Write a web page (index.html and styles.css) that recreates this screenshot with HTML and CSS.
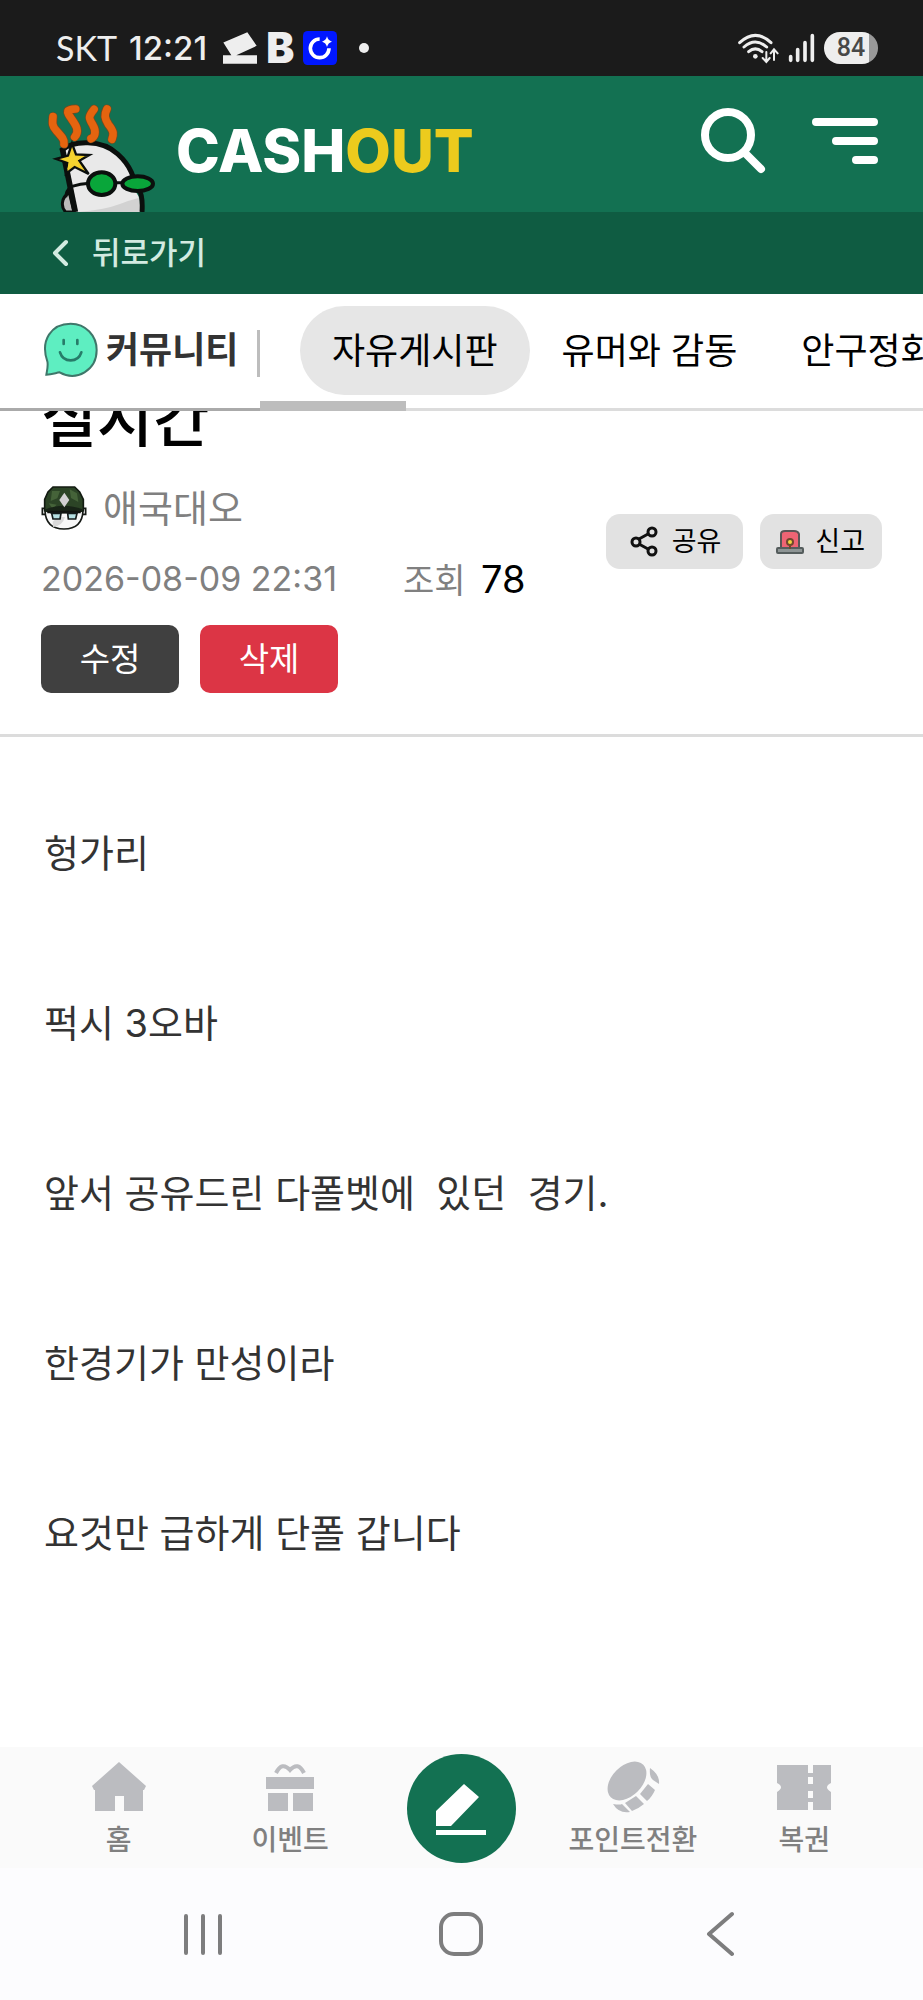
FILE: index.html
```html
<!DOCTYPE html>
<html lang="ko">
<head>
<meta charset="utf-8">
<meta name="viewport" content="width=device-width, initial-scale=1">
<title>CASHOUT - 자유게시판</title>
<link rel="stylesheet" href="styles.css">
</head>
<body>
<div class="status-bar">
  <span class="carrier">SKT</span>
  <span class="clock">12:21</span>
  <svg class="status-ticket" width="34" height="32" viewBox="668 97 102 95" aria-hidden="true"><path fill="#eee" d="M669 128 741 97l28 41-61 28h62v26H668v-26h25z"/></svg>
  <span class="status-b">B</span>
  <svg width="34" height="34" viewBox="909 94 102 102" aria-hidden="true"><rect x="909" y="94" width="102" height="102" rx="14" fill="#0017ff"/><path d="M959 118a28 28 0 1 0 28 28" fill="none" stroke="#fff" stroke-width="11"/><path fill="#fff" d="M981 110q3 13 15 16-12 3-15 16-3-13-15-16 12-3 15-16z"/></svg>
  <span class="status-dot"></span>
  <span class="status-right">
    <svg width="41" height="31" viewBox="770 96 123 93" fill="none" stroke="#eee" stroke-width="9" stroke-linecap="round" aria-hidden="true"><path d="M775 125q47-44 94 0M788 138q34-30 68 0M802 152q20-17 40 0"/><circle cx="822" cy="166" r="7" fill="#eee" stroke="none"/><path stroke="#1b1b1b" stroke-width="14" d="M856 152v30M878 176v-26"/><path stroke-width="6" d="M855 153v28m-11-10 11 12 10-12M878 177v-31m-10 11 10-12 11 12"/></svg>
    <svg width="27" height="31" viewBox="919 97 81 93" stroke="#eee" stroke-width="11" stroke-linecap="round" aria-hidden="true"><path d="M927 168v11M948 147v32M970 126v53M992 105v74"/></svg>
    <span class="battery">84</span>
  </span>
</div>

<header class="site-header">
  <a class="brand" href="#" aria-label="CASHOUT">
    <svg width="111" height="110" viewBox="45 36 333 330" aria-hidden="true">
      <path d="M107 366c-15-14-14-44 11-58l14 58z" fill="#bbb" stroke="#0b0f0d" stroke-width="9"/>
      <path d="M108 322q-2-20 16-32" fill="none" stroke="#0b0f0d" stroke-width="8"/>
      <path d="M96 182c38-30 118-33 166 10 40 34 52 72 58 118q12 12 10 56H132z" fill="#e9e9e9"/>
      <path d="M142 366q80-6 130-25 25-10 56-18v43z" fill="#d2d2d2"/>
      <path d="M93 182c36-32 122-34 170 10 40 36 50 70 56 112M327 300q12 16 9 66" fill="none" stroke="#0b0f0d" stroke-width="15"/>
      <path d="M97 175 136 366" stroke="#0b0f0d" stroke-width="17"/>
      <g fill="none" stroke-linecap="round">
        <g stroke="#7a471b" stroke-width="27"><path d="M69 80c-2 20-3 28 10 42 18 20 25 28 23 40M137 57c-25 1-30 5-17 23 12 19 33 40 14 61M192 58c-18 23-16 26-4 46 14 23 5 38-5 42M231 57c-9 18-7 28 4 46 18 22 16 30 11 45"/></g>
        <g stroke="#e4640f" stroke-width="23"><path d="M69 80c-2 20-3 28 10 42 18 20 25 28 23 40M137 57c-25 1-30 5-17 23 12 19 33 40 14 61M192 58c-18 23-16 26-4 46 14 23 5 38-5 42M231 57c-9 18-7 28 4 46 18 22 16 30 11 45"/></g>
      </g>
      <path d="m126 160 12 33 40 2-30 17 28 40-42-21-26 20 4-32-34-12 36-10z" fill="#f3cf2d" stroke="#0b0f0d" stroke-width="7"/>
      <path d="m126 178 8 23 24 1-18 11 10 20-20-12-19 19 6-25-18-8 22-4z" fill="#f5d42f"/>
      <path d="M126 289q25-8 52-9M255 278h25" fill="none" stroke="#0b0f0d" stroke-width="9"/>
      <ellipse cx="215" cy="281" rx="41" ry="34" fill="#09a63a" stroke="#0b0f0d" stroke-width="12"/>
      <ellipse cx="323" cy="281" rx="46" ry="22" fill="#09a63a" stroke="#0b0f0d" stroke-width="12"/>
    </svg>
    <span class="wordmark">CASH<span class="wordmark-accent">OUT</span></span>
  </a>
  <div class="header-actions">
    <button class="icon-button" aria-label="검색"><svg width="66" height="66" viewBox="0 0 66 66" fill="none" stroke="#fff" stroke-linecap="round"><circle cx="27" cy="27" r="23" stroke-width="8"/><path stroke-width="8" d="m45 46 15 15"/></svg></button>
    <button class="icon-button" aria-label="메뉴"><svg width="66" height="46" viewBox="0 0 66 46" stroke="#fff" stroke-width="8" stroke-linecap="round"><path d="M4 4h58M24 23h38M44 42h18"/></svg></button>
  </div>
</header>

<nav class="back-bar">
  <a class="back-link" href="#"><svg width="18" height="28" viewBox="0 0 18 28" fill="none" stroke="#d3ebe1" stroke-width="4" stroke-linecap="round" stroke-linejoin="round" aria-hidden="true"><path d="M15 3 4 14l11 11"/></svg>뒤로가기</a>
</nav>

<nav class="board-nav">
  <a class="board-home" href="#">
    <svg width="56" height="56" viewBox="130 100 168 168" aria-hidden="true"><path d="M140 258c3-18 6-28 3-40C121 155 155 105 213 105c45 0 78 36 78 79 0 60-60 96-111 67-12 2-24 6-40 7z" fill="#5eeec1" stroke="#3f776a" stroke-width="6"/><path d="M192 154v12M233 154v12M181 191c10 32 54 32 64 0" fill="none" stroke="#277c69" stroke-width="8" stroke-linecap="round"/></svg>
    <span>커뮤니티</span>
    <i class="divider"></i>
  </a>
  <div class="tabs">
    <a class="tab tab-active" href="#">자유게시판</a>
    <a class="tab" href="#">유머와 감동</a>
    <a class="tab" href="#">안구정화</a>
    <i class="scroll-thumb"></i>
  </div>
</nav>

<main class="post">
  <section class="post-head">
    <h1 class="post-title">실시간</h1>
    <div class="post-row">
      <div class="post-info">
        <div class="author">
          <svg width="46" height="44" viewBox="9 10 138 132" aria-hidden="true">
            <path d="M13 77h12v18H13zM131 77h12v18h-12z" fill="#f3f3f3" stroke="#161a16" stroke-width="5"/>
            <path d="M21 84q2 54 57 55 55-1 57-55z" fill="#f8f8f8" stroke="#161a16" stroke-width="5"/>
            <path d="M45 133q28-2 36-30H60l-16 14z" fill="#dadada"/>
            <path d="M20 84V50l10-22 15-15h65l15 15 11 22v34l-20 6H40z" fill="#2c4426" stroke="#131b12" stroke-width="5"/>
            <path d="M42 25h24l-8 22-20 8zM95 20l22 12 4 26-22-12zM32 62l24 4-12 12z" fill="#456339"/>
            <path d="M22 80q55-22 112 0v8H22z" fill="#182417"/>
            <path d="m79 30 15 22-15 22-15-22z" fill="#d2d0d2"/>
            <path d="M28 88h100" stroke="#10130f" stroke-width="8"/>
            <path d="M41 92h28l-3 17H45zM89 92h28l-4 17H91z" fill="#b5dfe2" stroke="#141a1a" stroke-width="5"/>
          </svg>
          <span>애국대오</span>
        </div>
        <div class="post-meta">
          <time>2026-08-09 22:31</time>
          <span class="views">조회 <strong>78</strong></span>
        </div>
      </div>
      <div class="post-tools">
        <button class="tool tool-share"><svg width="28" height="31" viewBox="0 0 28 31" fill="none" stroke="#111" stroke-width="3" aria-hidden="true"><path d="m9 13 9-5M9 18l9 5"/><circle cx="6" cy="16" r="4"/><circle cx="22" cy="6" r="4"/><circle cx="22" cy="25" r="4"/></svg>공유</button>
        <button class="tool"><svg width="28" height="26" viewBox="0 0 28 26" aria-hidden="true"><path d="M5 19V5q0-3 4-3h9q4 0 5 3v14z" fill="#ef6474" stroke="#5b5556" stroke-width="2"/><rect x="1" y="19" width="26" height="5" rx="1" fill="#8d9494" stroke="#555d5d" stroke-width="2"/><circle cx="14" cy="13" r="4" fill="#70482d"/><circle cx="14" cy="13" r="2" fill="#f3d53e"/><path d="M14 17v3" stroke="#70482d" stroke-width="2"/></svg>신고</button>
      </div>
    </div>
    <div class="owner-actions">
      <button class="action">수정</button>
      <button class="action action-danger">삭제</button>
    </div>
  </section>
  <article class="post-body">
    <p>헝가리</p>
    <p>퍽시 3오바</p>
    <p>앞서 공유드린 다폴벳에  있던  경기.</p>
    <p>한경기가 만성이라</p>
    <p>요것만 급하게 단폴 갑니다</p>
  </article>
</main>

<nav class="bottom-nav">
  <a class="nav-item" href="#"><svg width="54" height="52" viewBox="0 0 54 52" fill="#bbbcc0" aria-hidden="true"><path d="M27 1 54 25l-2 4h-1v21H32V35h-9v15H3V29H2l-2-4z"/></svg>홈</a>
  <a class="nav-item" href="#"><svg width="54" height="52" viewBox="0 0 54 52" fill="#bbbcc0" aria-hidden="true"><path d="M3 16h48v12H3zM5 32h20v18H5zM30 32h20v18H30z"/><path d="M13 12q6-12 14-3 8-9 14 3" fill="none" stroke="#bbbcc0" stroke-width="4"/></svg>이벤트</a>
  <button class="write-button" aria-label="글쓰기"><svg width="50" height="52" viewBox="0 0 50 52" fill="#fff" aria-hidden="true"><path d="M28 1 43 14 15 43H0V28zM0 47h50v5H0z"/></svg></button>
  <a class="nav-item" href="#"><svg width="54" height="52" viewBox="0 0 54 52" fill="#bbbcc0" aria-hidden="true"><ellipse cx="21" cy="20" rx="23" ry="15" transform="rotate(-45 21 20)"/><path d="M44 7q10 7 9 16l-6-4q-4-3-3-12zM42 23l7 6q-3 7-8 11l-7-7zM30 35l8 8q-6 5-12 7l-7-8zM7 43q7 1 9 0l8 8q-11 2-17-8z"/></svg>포인트전환</a>
  <a class="nav-item" href="#"><svg width="54" height="52" viewBox="0 0 54 52" fill="#bbbcc0" aria-hidden="true"><path d="M0 4h31v8h5V4h18v18q-8 4 0 9v18H36v-8h-5v8H0V31q8-5 0-9zM31 16v7h5v-7zm0 14v7h5v-7z" fill-rule="evenodd"/></svg>복권</a>
</nav>
<nav class="system-nav" aria-label="시스템">
  <button aria-label="최근 앱"><svg width="44" height="44" viewBox="0 0 44 44" stroke="#7d7d7e" stroke-width="4" stroke-linecap="round"><path d="M5 4v37M22 4v37M39 4v37"/></svg></button>
  <button aria-label="홈 화면"><svg width="46" height="46" viewBox="0 0 46 46" fill="none" stroke="#7d7d7e" stroke-width="4"><rect x="3" y="3" width="40" height="40" rx="13"/></svg></button>
  <button aria-label="이전"><svg width="28" height="46" viewBox="0 0 28 46" fill="none" stroke="#7d7d7e" stroke-width="4" stroke-linecap="round" stroke-linejoin="round"><path d="M26 3 3 23l23 20"/></svg></button>
</nav>
</body>
</html>
```
FILE: styles.css
```css
* { box-sizing: border-box; }

body {
  margin: 0;
  min-height: 100vh;
  display: flex;
  flex-direction: column;
  background: #fff;
  color: #000;
  font-family: Inter, "Noto Sans CJK KR", sans-serif;
  overflow-x: hidden;
}

a { color: inherit; text-decoration: none; }
button { margin: 0; padding: 0; border: 0; background: none; color: inherit; font: inherit; cursor: pointer; }
svg { display: block; flex: none; }

/* Phone status bar */
.status-bar {
  display: flex;
  align-items: center;
  height: 76px;
  padding: 20px 45px 0 56px;
  background: #1b1b1b;
  color: #eee;
}
.carrier { font: 400 34px/40px Lato, sans-serif; }
.clock { margin: 0 16px 0 12px; font-size: 33px; line-height: 40px; font-weight: 500; }
.status-b { margin: 0 9px; font-size: 42px; line-height: 40px; font-weight: 900; }
.status-dot { width: 10px; height: 10px; margin-left: 22px; border-radius: 50%; background: #eee; }
.status-right { display: flex; align-items: center; gap: 9px; margin-left: auto; }
.battery {
  width: 54px;
  height: 32px;
  border-radius: 16px;
  background: linear-gradient(90deg, #eee 45px, #999 45px);
  color: #484848;
  font: 500 25px/32px Roboto, sans-serif;
  text-align: center;
}

/* Site header */
.site-header {
  display: flex;
  justify-content: space-between;
  height: 136px;
  padding: 26px 45px 0;
  background: #137152;
}
.brand { display: flex; align-items: flex-start; gap: 20px; }
.wordmark { padding-top: 15px; color: #fff; font-size: 59px; line-height: 68px; font-weight: 800; }
.wordmark-accent { color: #eccb1d; }
.header-actions { display: flex; align-items: flex-start; gap: 45px; padding-top: 6px; }
.icon-button:last-child { padding-top: 10px; }

.back-bar { display: flex; align-items: center; height: 82px; padding: 0 51px; background: #0f5c42; }
.back-link { display: flex; align-items: center; gap: 23px; color: #d3ebe1; font-size: 31px; line-height: 40px; font-weight: 500; }

/* Board tabs */
.board-nav { display: flex; height: 117px; overflow: hidden; }
.board-home {
  display: flex;
  flex: none;
  align-items: center;
  width: 260px;
  padding: 0 0 3px 43px;
  border-bottom: 3px solid #aaa;
  color: #333;
  font-size: 36px;
  line-height: 52px;
  font-weight: 700;
}
.board-home span { margin-left: 7px; white-space: nowrap; }
.divider { width: 3px; height: 47px; margin: 8px 0 0 auto; background: #bdbdbd; }
.tabs {
  position: relative;
  display: flex;
  flex: 1;
  align-items: flex-start;
  min-width: 0;
  padding: 12px 0 0 40px;
  border-bottom: 3px solid #dcdcdc;
}
.tab { flex: none; height: 89px; padding: 0 32px; border-radius: 45px; font-size: 36px; line-height: 91px; white-space: nowrap; }
.tab-active { background: #e6e6e6; }
.scroll-thumb { position: absolute; left: 0; bottom: -3px; width: 146px; height: 10px; background: #bdbdbd; }

/* Post */
.post { flex: 1; overflow: hidden; }
.post-head { padding: 0 41px 41px; border-bottom: 3px solid #dcdcdc; }
.post-title { margin: -34px 0 0; font-size: 61px; line-height: 86px; font-weight: 500; }
.post-row { display: flex; align-items: flex-end; justify-content: space-between; }
.author { display: flex; align-items: center; gap: 16px; height: 90px; color: #808080; font-size: 38px; line-height: 56px; }
.post-meta { display: flex; align-items: center; gap: 66px; height: 50px; color: #808080; font-size: 34px; white-space: nowrap; }
.views strong { margin-left: 6px; color: #000; font-size: 38px; font-weight: 400; }
.post-tools { display: flex; gap: 17px; padding-bottom: 34px; }
.tool {
  display: flex;
  align-items: center;
  gap: 11px;
  height: 55px;
  padding: 0 17px 0 16px;
  border-radius: 14px;
  background: #e2e2e2;
  font-size: 27px;
  line-height: 55px;
}
.tool-share { gap: 14px; padding: 0 22px 0 24px; }
.owner-actions { display: flex; gap: 21px; margin-top: 22px; }
.action { width: 138px; height: 68px; border-radius: 10px; background: #404040; color: #fff; font-size: 33px; line-height: 66px; }
.action-danger { background: #dc3545; }

.post-body { padding: 87px 44px; color: #333; font-size: 38px; line-height: 58px; }
.post-body p { margin: 0 0 112px; white-space: pre-wrap; }
.post-body p:last-child { margin-bottom: 0; }

/* Bottom navigation */
.bottom-nav { display: grid; grid-template-columns: repeat(5, 1fr); height: 121px; padding: 0 33px; background: #fafafa; }
.nav-item {
  display: flex;
  flex-direction: column;
  align-items: center;
  padding-top: 14px;
  color: #808080;
  font-size: 28px;
  line-height: 54px;
  font-weight: 500;
  white-space: nowrap;
}
.write-button { display: grid; place-items: center; justify-self: center; width: 109px; height: 109px; margin-top: 7px; border-radius: 50%; background: #137152; }

.system-nav { display: grid; grid-template-columns: repeat(3, 1fr); height: 132px; padding: 0 74px; background: #fcfcfe; }
.system-nav button { display: grid; place-items: center; }
```
